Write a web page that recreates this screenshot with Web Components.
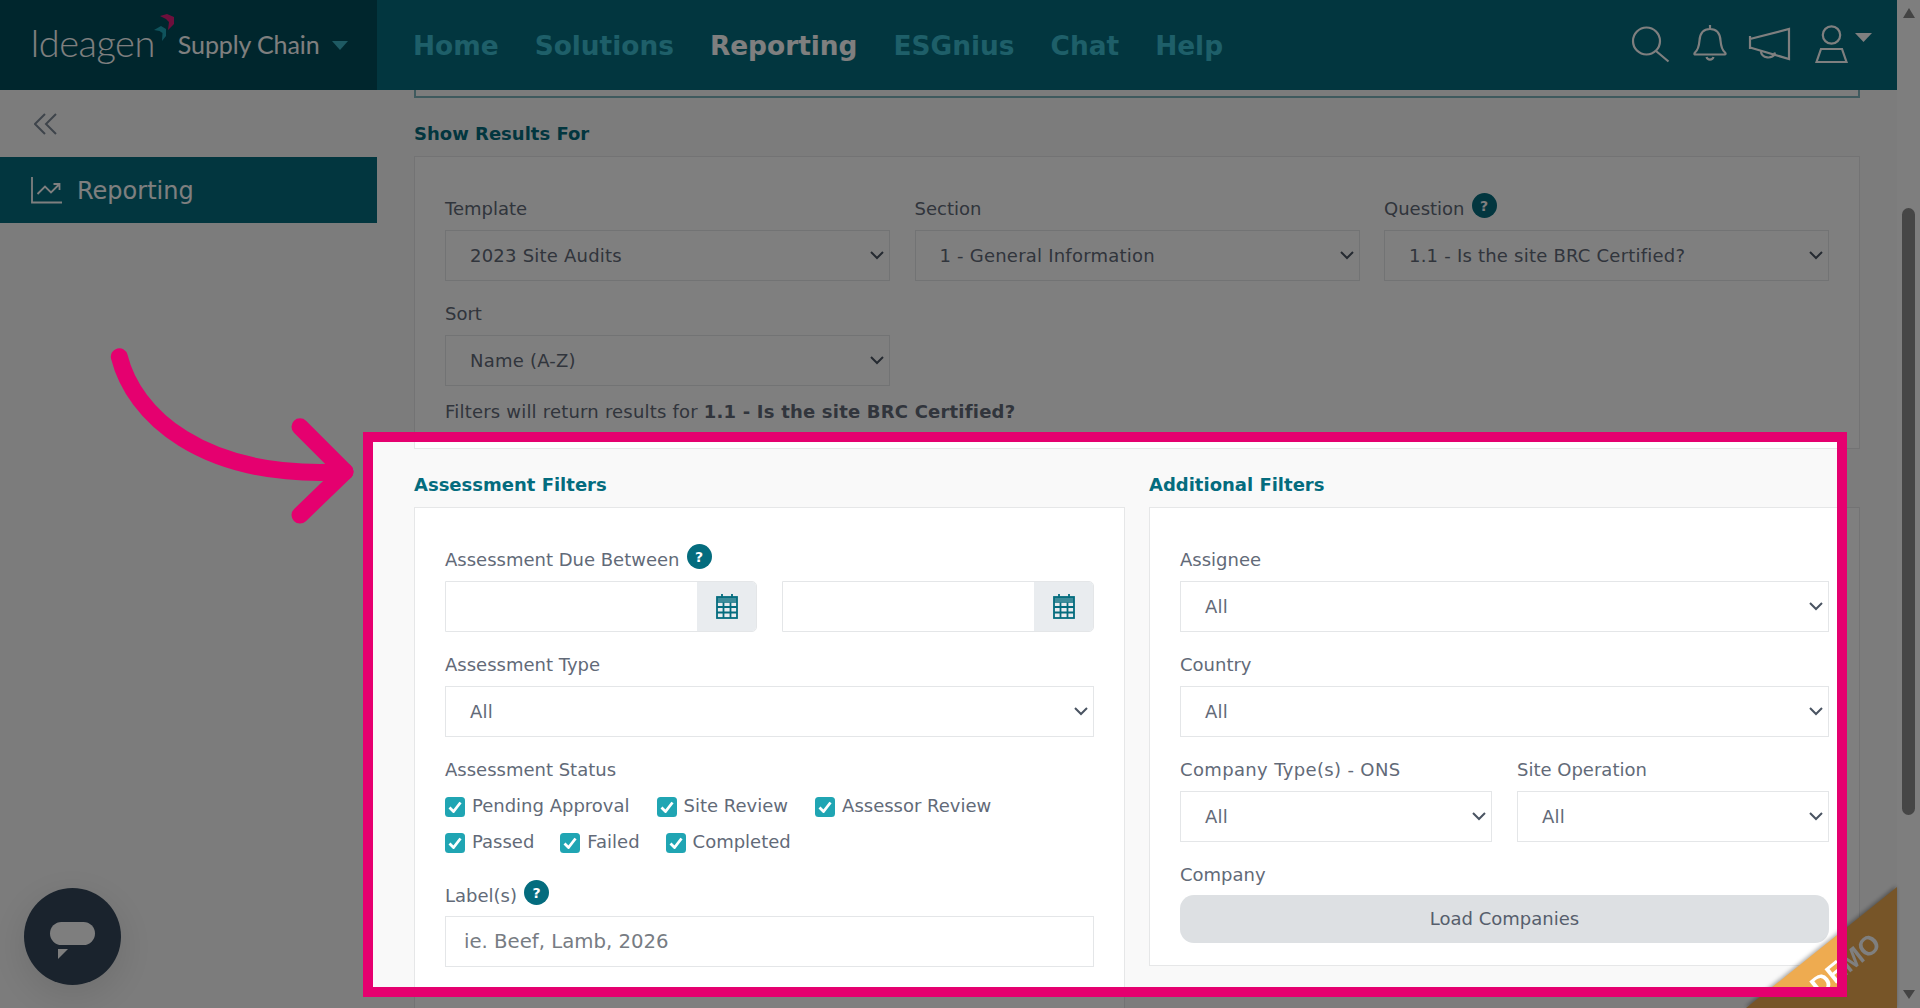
<!DOCTYPE html>
<html lang="en"><head><meta charset="utf-8"><title>Reporting</title>
<style>
html,body{margin:0;height:1008px;overflow:hidden;background:#f9f9f9}
body{font-family:"DejaVu Sans",Verdana,sans-serif;font-size:18px;color:#626a78;position:relative}
</style></head><body>
<app-shell>
  <app-header slot="header"></app-header>
  <side-bar slot="side"></side-bar>
  <div slot="main">
    <top-stub></top-stub>
    <panel-title>Show Results For</panel-title>
    <panel-card style="padding-bottom:24.5px">
      <form-grid cols="3">
        <form-field label="Template"><select-box>2023 Site Audits</select-box></form-field>
        <form-field label="Section"><select-box>1 - General Information</select-box></form-field>
        <form-field label="Question" help><select-box>1.1 - Is the site BRC Certified?</select-box></form-field>
        <form-field label="Sort"><select-box>Name (A-Z)</select-box></form-field>
      </form-grid>
      <note-line>Filters will return results for <b>1.1 - Is the site BRC Certified?</b></note-line>
    </panel-card>
    <two-cols>
      <div>
        <panel-title>Assessment Filters</panel-title>
        <panel-card style="height:620px">
          <form-field label="Assessment Due Between" help>
            <form-grid cols="2"><date-input></date-input><date-input></date-input></form-grid>
          </form-field>
          <form-field label="Assessment Type"><select-box>All</select-box></form-field>
          <form-field label="Assessment Status" tight>
            <check-row>
              <check-item>Pending Approval</check-item><check-item>Site Review</check-item><check-item>Assessor Review</check-item>
            </check-row>
            <check-row style="gap:26px">
              <check-item>Passed</check-item><check-item>Failed</check-item><check-item>Completed</check-item>
            </check-row>
          </form-field>
          <form-field label="Label(s)" help tight2><text-box>ie. Beef, Lamb, 2026</text-box></form-field>
        </panel-card>
      </div>
      <div>
        <panel-title>Additional Filters</panel-title>
        <panel-card style="height:459px">
          <form-field label="Assignee"><select-box>All</select-box></form-field>
          <form-field label="Country"><select-box>All</select-box></form-field>
          <form-grid cols="2">
            <form-field label="Company Type(s) - ONS" style="letter-spacing:.35px"><select-box>All</select-box></form-field>
            <form-field label="Site Operation"><select-box>All</select-box></form-field>
          </form-grid>
          <form-field label="Company" tight2><grey-button>Load Companies</grey-button></form-field>
        </panel-card>
      </div>
    </two-cols>
  </div>
  <fake-scroll slot="scroll"></fake-scroll>
</app-shell>
<demo-ribbon></demo-ribbon>
<chat-fab></chat-fab>
<spot-light></spot-light>
<pink-arrow></pink-arrow>
<script>
function def(name, render){
  customElements.define(name, class extends HTMLElement{
    connectedCallback(){
      if(this.shadowRoot) return;
      this.attachShadow({mode:'open'}).innerHTML = render(this);
    }
  });
}
const TEAL='#046c7e';
def('app-shell',()=>`<style>
:host{display:grid;grid-template-columns:1fr 23px;grid-template-rows:90px 918px;grid-template-areas:"h s" "b s";height:1008px;overflow:hidden}
.h{grid-area:h;display:block}.s{grid-area:s}
.b{grid-area:b;display:grid;grid-template-columns:377px 1fr;min-height:0;overflow:hidden}
.m{padding:0 37px;min-width:0;overflow:hidden}
</style>
<div class="h"><slot name="header"></slot></div>
<div class="b"><div><slot name="side"></slot></div><div class="m"><slot name="main"></slot></div></div>
<div class="s"><slot name="scroll"></slot></div>`);
def('app-header',()=>`<style>
:host{display:flex;height:90px;background:${TEAL};color:#fff;align-items:stretch}
.brand{width:377px;background:#004c5a;display:flex;align-items:center;box-sizing:border-box;padding-left:30px;flex:none}
.ideagen{font:300 38px/1 Lato,"Open Sans",sans-serif;letter-spacing:-.5px;margin-top:-7px}
.mark{width:26px;height:27px;margin:0 0 35px -4px;flex:none}
.sc{font:400 25px/1 Lato,"Open Sans",sans-serif;letter-spacing:-.1px;margin:-2px 0 0 1px;white-space:nowrap}
.tri{width:0;height:0;border:8.5px solid transparent;border-top:9px solid #3cb4c6;border-bottom:0;margin:0 0 0 12px}
nav{display:flex;gap:36px;padding-left:36px;align-items:center;font-weight:700;font-size:26.4px;color:#3cbed2}
nav span.on{color:#fff}
.ic{margin-left:auto;display:flex;align-items:center;padding-right:25px}
svg{display:block;fill:none;stroke:#fff;stroke-width:2.2}
</style>
<div class="brand"><span class="ideagen">Ideagen</span>
<svg class="mark" viewBox="0 0 26 27" style="stroke:none"><path fill="#dd1f78" d="M9 2l7-2 7 3v7l-6 6 1-8-3-3z"/><path fill="#1fa6b8" d="M3 16l7-4 5 3v7l-4 5 .5-8-3-2z"/></svg>
<span class="sc">Supply Chain</span><span class="tri"></span></div>
<nav><span>Home</span><span>Solutions</span><span class="on">Reporting</span><span>ESGnius</span><span>Chat</span><span>Help</span></nav>
<div class="ic">
<svg width="39" height="40" viewBox="0 0 39 40" style="margin-top:-2px"><circle cx="15.500" cy="17" r="13.500"/><path d="M25 27l12.500 10.500"/></svg>
<svg width="35" height="38" viewBox="0 0 35 38" style="margin-left:23px;margin-top:-5px"><path d="M17 1v4M2 28.500c3-2.500 4-6 4.500-12C7 9 11 5 17 5s10 4 10.500 11.500c.5 6 1.500 9.500 4.500 12 .8.8.8 2 0 2H2c-.8 0-.8-1.200 0-2zM13.500 33c1 3.500 6 3.500 7 0"/></svg>
<svg width="44" height="36" viewBox="0 0 44 36" style="margin-left:20px;margin-top:-3px"><path d="M2 10v13M2 13L41 3v30L2 21.500M13 24c-1 9 13 10 14 2.500"/></svg>
<svg width="33" height="38" viewBox="0 0 33 38" style="margin-left:23px;margin-top:-2px"><circle cx="16.500" cy="10" r="8.700"/><path d="M6 24h21l4.500 13H1.500z"/></svg>
<svg width="17" height="10" viewBox="0 0 17 10" style="margin-left:7px;margin-top:-14px;stroke:none"><path fill="#fff" d="M0 0h17l-8.500 9z"/></svg>
</div>`);
def('side-bar',()=>`<style>
:host{display:block}
.col{height:67px;padding:23px 0 0 34px;box-sizing:border-box}
.item{height:66px;background:${TEAL};display:flex;align-items:center;padding-left:31px;color:#fff;font-size:24px;gap:15px}
.item span{margin-top:1px}
svg{display:block;fill:none}
</style>
<div class="col"><svg width="23" height="22" viewBox="0 0 23 22" stroke="#7d8996" stroke-width="2"><path d="M11 1L1 11l10 10M22 1L12 11l10 10"/></svg></div>
<div class="item"><svg width="31" height="27" viewBox="0 0 31 27" stroke="#fff" stroke-width="1.800"><path d="M1 0v25.500h30M6.500 17L14 9.500l6 6 8.500-8.500M22.500 7h6v6"/></svg><span>Reporting</span></div>`);
def('top-stub',()=>`<style>:host{display:block;height:8px;box-sizing:border-box;border:2px solid #7fb4bd;border-top:0}</style>`);
def('panel-title',()=>`<style>:host{display:block;font-weight:700;font-size:18px;line-height:24px;color:${TEAL};padding:24px 0 10px}</style><slot></slot>`);
def('panel-card',()=>`<style>:host{display:block;background:#fff;border:1.500px solid #e6e7e8;padding:39.5px 30px 0;box-sizing:border-box}</style><slot></slot>`);
def('two-cols',()=>`<style>:host{display:grid;grid-template-columns:1fr 1fr;gap:24px}</style><slot></slot>`);
def('form-grid',(el)=>`<style>:host{display:grid;grid-template-columns:repeat(${el.getAttribute('cols')},1fr);column-gap:${el.getAttribute('cols')==='3'?24.500:25}px}</style><slot></slot>`);
def('form-field',(el)=>{
  const help=el.hasAttribute('help')?'<help-dot></help-dot>':'';
  const gap=el.hasAttribute('tight')?6:el.hasAttribute('tight2')?8:9;
  const mb=el.hasAttribute('tight')?24:21;
  return `<style>:host{display:block;margin-bottom:${mb}px}
  .l{display:flex;align-items:center;height:24px;gap:7px;margin-bottom:${gap}px;white-space:nowrap}</style>
  <div class="l"><span>${el.getAttribute('label')}</span>${help}</div><slot></slot>`;
});
def('help-dot',()=>`<style>:host{display:flex;width:25px;height:25px;border-radius:50%;background:${TEAL};color:#fff;align-items:center;justify-content:center;font-weight:700;font-size:14px;letter-spacing:0;margin-bottom:6px;flex:none}</style>?`);
def('select-box',()=>`<style>:host{display:flex;align-items:center;height:51px;box-sizing:border-box;border:1.500px solid #e4e6e8;background:#fff;padding:0 5px 0 24px;white-space:nowrap;letter-spacing:.22px}
span{flex:1}svg{display:block;fill:none;stroke:#4a5462;stroke-width:2}</style><span><slot></slot></span><svg width="14" height="9" viewBox="0 0 14 9"><path d="M1 1l6 6 6-6"/></svg>`);
def('text-box',()=>`<style>:host{display:flex;align-items:center;height:51px;box-sizing:border-box;border:1.500px solid #e4e6e8;background:#fff;padding:0 18px;color:#777c83;white-space:nowrap;font-size:19.700px}</style><slot></slot>`);
def('date-input',()=>`<style>:host{display:flex;height:51px;box-sizing:border-box;border:1.500px solid #e4e6e8;background:#fff;border-radius:0 5px 5px 0;overflow:hidden}
.f{flex:1}.a{width:59px;background:#e9ecef;display:flex;align-items:center;justify-content:center}svg{display:block}</style>
<div class="f"></div><div class="a"><svg width="22" height="25" viewBox="0 0 22 25"><g fill="none" stroke="${TEAL}" stroke-width="1.800"><rect x="1" y="3" width="20" height="21"/><path d="M6 0v4M16 0v4M1 13h20M1 18.500h20M7.500 8.500V24M14.500 8.500V24"/></g><rect x="1" y="3" width="20" height="6" fill="${TEAL}" opacity=".75"/></svg></div>`);
def('check-row',()=>`<style>:host{display:flex;height:36px;align-items:center;gap:27px}</style><slot></slot>`);
def('check-item',()=>`<style>:host{display:flex;align-items:center;gap:7px;white-space:nowrap}
.b{width:20px;height:20px;border-radius:3.500px;background:#20a5b3;display:flex;align-items:center;justify-content:center;flex:none;margin-top:2px}
svg{display:block;fill:none;stroke:#fff;stroke-width:2.800}</style>
<span class="b"><svg width="14" height="12" viewBox="0 0 14 12"><path d="M1.500 6.500L5.500 10.500L12.500 1.500"/></svg></span><span><slot></slot></span>`);
def('note-line',()=>`<style>:host{display:block;line-height:24px;white-space:nowrap;margin-top:-7px;letter-spacing:.2px}</style><slot></slot>`);
def('grey-button',()=>`<style>:host{display:flex;height:48px;background:#dde0e3;border-radius:14px;align-items:center;justify-content:center;color:#565e6c}</style><slot></slot>`);
def('fake-scroll',()=>`<style>:host{display:flex;flex-direction:column;align-items:center;height:1008px;box-sizing:border-box;padding:8px 5px 9px 5px;background:#fdfdfd}
.t{width:13px;height:607px;background:#8c8c8c;border-radius:7px;margin-top:190px;flex:none}
svg{display:block;flex:none;fill:#888}.sp{flex:1}</style>
<svg width="12" height="10" viewBox="0 0 12 10"><path d="M6 0l6 10H0z"/></svg><div class="t"></div><div class="sp"></div>
<svg width="12" height="9" viewBox="0 0 12 9"><path d="M0 0h12L6 9z"/></svg>`);
def('demo-ribbon',()=>`<style>:host{position:absolute;left:1746px;top:887px;width:151px;height:121px;display:block;filter:drop-shadow(-1px -1px 2px rgba(0,0,0,.35))}
.c{position:absolute;inset:0;background:#eeab50;clip-path:polygon(100% 0,100% 100%,0 100%);overflow:hidden}
.t{position:absolute;left:59px;top:61px;width:80px;text-align:center;transform:rotate(-38.700deg);color:#fff;font:700 27px/34px "Liberation Sans",sans-serif}</style>
<div class="c"><div class="t">DEMO</div></div>`);
def('chat-fab',()=>`<style>:host{position:absolute;left:24px;top:888px;width:97px;height:97px;border-radius:50%;background:#34465a;display:block;box-shadow:0 10px 40px rgba(0,0,0,.12)}
svg{display:block}</style>
<svg width="97" height="97" viewBox="0 0 97 97"><rect x="26" y="34" width="45" height="23" rx="11.500" fill="#fdfdfd"/><path d="M34 61h10L34 71z" fill="#fdfdfd"/></svg>`);
def('spot-light',()=>`<style>:host{position:absolute;left:363px;top:432px;width:1484px;height:565px;box-sizing:border-box;border:10px solid #e5006f;display:block;box-shadow:0 0 0 3000px rgba(0,0,0,.5);pointer-events:none}</style>`);
def('pink-arrow',()=>`<style>:host{position:absolute;left:100px;top:340px;width:270px;height:190px;display:block;pointer-events:none}svg{display:block}</style>
<svg width="270" height="190" viewBox="100 340 270 190" fill="none" stroke="#e5006f" stroke-width="17" stroke-linecap="round" stroke-linejoin="round"><path d="M119.300 356.700C133.300 413.300 200 480 345 471.700"/><path d="M300 426.700L345 471.700L300 515"/></svg>`);
</script>
</body></html>
